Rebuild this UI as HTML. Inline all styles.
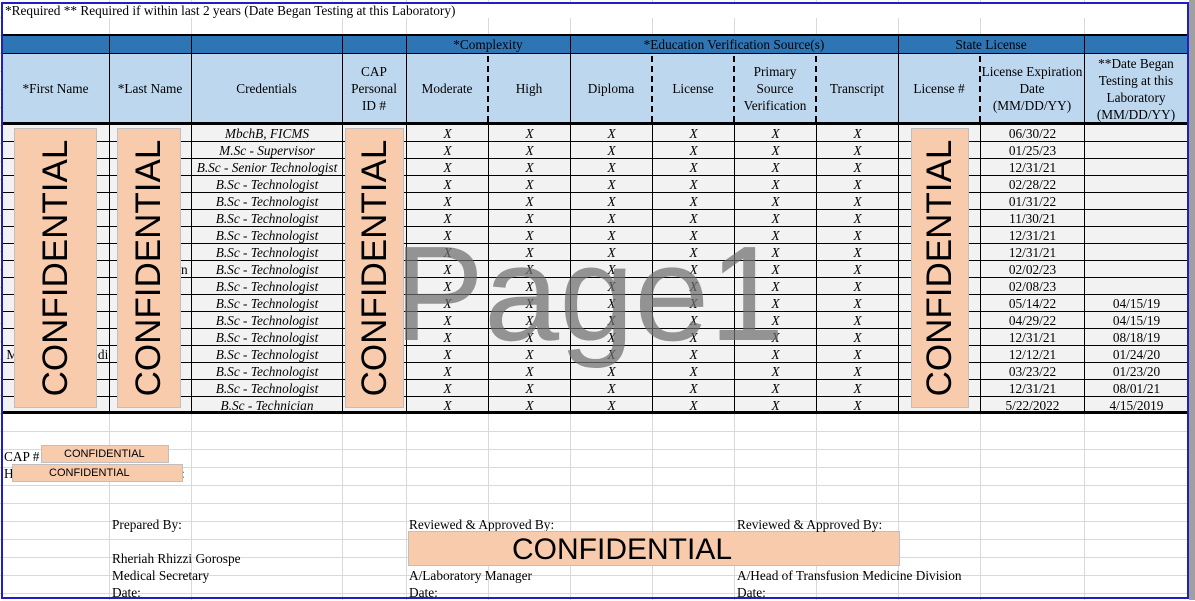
<!DOCTYPE html>
<html><head><meta charset="utf-8"><style>
*{margin:0;padding:0;box-sizing:border-box}
body{width:1195px;height:600px;position:relative;overflow:hidden;background:#fff;font-family:"Liberation Serif",serif;font-size:13px;color:#000}
.a{position:absolute}
table{border-collapse:collapse;table-layout:fixed;position:absolute;left:2px;top:124px}
td{border:1px solid #000;height:17px;padding:0;text-align:center;font-style:italic;font-size:13.3px;line-height:15px;background:#f2f2f2;white-space:nowrap;overflow:hidden}
td.n{font-style:normal}
.hd{position:absolute;top:54px;height:69px;background:#bdd7ee;display:flex;align-items:center;justify-content:center;text-align:center;line-height:17px;font-size:13.3px}
.bh{position:absolute;top:36px;height:18px;background:#2e75b6;text-align:center;line-height:18px;font-size:13.3px}
.vl{position:absolute;width:1px;background:#000}
.dl{position:absolute;width:0;border-left:2px dashed #000;top:56px;height:66px}
.conf{position:absolute;background:#f8cbad;border:1px solid #bfbfbf;overflow:hidden}
.conf span{position:absolute;left:50%;top:50%;transform:translate(-50%,-50%) rotate(-90deg);font-family:"Liberation Sans",sans-serif;font-size:35px;white-space:nowrap;color:#000}
.t{position:absolute;font-size:13.3px;white-space:nowrap}
</style></head><body>
<div class="a" style="left:0;top:0;width:1188px;height:600px;background-image:repeating-linear-gradient(to bottom,transparent 0 17px,#d9d9d9 17px 18px)"></div>
<div class="a" style="left:0;top:0;width:1188px;height:600px;background-image:linear-gradient(#d9d9d9,#d9d9d9),linear-gradient(#d9d9d9,#d9d9d9),linear-gradient(#d9d9d9,#d9d9d9),linear-gradient(#d9d9d9,#d9d9d9),linear-gradient(#d9d9d9,#d9d9d9),linear-gradient(#d9d9d9,#d9d9d9),linear-gradient(#d9d9d9,#d9d9d9),linear-gradient(#d9d9d9,#d9d9d9),linear-gradient(#d9d9d9,#d9d9d9),linear-gradient(#d9d9d9,#d9d9d9),linear-gradient(#d9d9d9,#d9d9d9),linear-gradient(#d9d9d9,#d9d9d9);background-size:1px 600px;background-repeat:no-repeat;background-position:109px 0,191px 0,342px 0,406px 0,488px 0,570px 0,652px 0,734px 0,816px 0,898px 0,980px 0,1084px 0"></div>
<div class="a" style="left:3px;top:3px;width:1184px;height:15px;background:#fff"></div>
<div class="t" style="left:5px;top:3px">*Required ** Required if within last 2 years (Date Began Testing at this Laboratory)</div>
<div class="a" style="left:2px;top:34px;width:1186px;height:2px;background:#000"></div>
<div class="bh" style="left:2px;width:1186px"></div>
<div class="bh" style="left:406px;width:164px">*Complexity</div>
<div class="bh" style="left:570px;width:328px">*Education Verification Source(s)</div>
<div class="bh" style="left:898px;width:186px">State License</div>
<div class="hd" style="left:2px;width:107px">*First Name</div>
<div class="hd" style="left:109px;width:82px">*Last Name</div>
<div class="hd" style="left:191px;width:151px">Credentials</div>
<div class="hd" style="left:342px;width:64px">CAP<br>Personal<br>ID #</div>
<div class="hd" style="left:406px;width:82px">Moderate</div>
<div class="hd" style="left:488px;width:82px">High</div>
<div class="hd" style="left:570px;width:82px">Diploma</div>
<div class="hd" style="left:652px;width:82px">License</div>
<div class="hd" style="left:734px;width:82px">Primary<br>Source<br>Verification</div>
<div class="hd" style="left:816px;width:82px">Transcript</div>
<div class="hd" style="left:898px;width:82px">License #</div>
<div class="hd" style="left:980px;width:104px">License Expiration<br>Date<br>(MM/DD/YY)</div>
<div class="hd" style="left:1084px;width:104px;align-items:flex-start;padding-top:1px">**Date Began<br>Testing at this<br>Laboratory<br>(MM/DD/YY)</div>
<div class="vl" style="left:109px;top:36px;height:88px"></div>
<div class="vl" style="left:191px;top:36px;height:88px"></div>
<div class="vl" style="left:342px;top:36px;height:88px"></div>
<div class="vl" style="left:406px;top:36px;height:88px"></div>
<div class="vl" style="left:570px;top:36px;height:88px"></div>
<div class="vl" style="left:898px;top:36px;height:88px"></div>
<div class="vl" style="left:1084px;top:36px;height:88px"></div>
<div class="a" style="left:2px;top:53px;width:1186px;height:1px;background:#000"></div>
<div class="dl" style="left:487px"></div><div class="dl" style="left:651px"></div><div class="dl" style="left:733px"></div><div class="dl" style="left:815px"></div><div class="dl" style="left:979px"></div>
<table>
<colgroup><col style="width:107px"><col style="width:82px"><col style="width:151px"><col style="width:64px"><col style="width:82px"><col style="width:82px"><col style="width:82px"><col style="width:82px"><col style="width:82px"><col style="width:82px"><col style="width:82px"><col style="width:104px"><col style="width:104px"></colgroup>
<tr><td></td><td></td><td>MbchB, FICMS</td><td></td><td>X</td><td>X</td><td>X</td><td>X</td><td>X</td><td>X</td><td></td><td class="n">06/30/22</td><td></td></tr>
<tr><td></td><td></td><td>M.Sc - Supervisor</td><td></td><td>X</td><td>X</td><td>X</td><td>X</td><td>X</td><td>X</td><td></td><td class="n">01/25/23</td><td></td></tr>
<tr><td></td><td></td><td>B.Sc - Senior Technologist</td><td></td><td>X</td><td>X</td><td>X</td><td>X</td><td>X</td><td>X</td><td></td><td class="n">12/31/21</td><td></td></tr>
<tr><td></td><td></td><td>B.Sc - Technologist</td><td></td><td>X</td><td>X</td><td>X</td><td>X</td><td>X</td><td>X</td><td></td><td class="n">02/28/22</td><td></td></tr>
<tr><td></td><td></td><td>B.Sc - Technologist</td><td></td><td>X</td><td>X</td><td>X</td><td>X</td><td>X</td><td>X</td><td></td><td class="n">01/31/22</td><td></td></tr>
<tr><td></td><td></td><td>B.Sc - Technologist</td><td></td><td>X</td><td>X</td><td>X</td><td>X</td><td>X</td><td>X</td><td></td><td class="n">11/30/21</td><td></td></tr>
<tr><td></td><td></td><td>B.Sc - Technologist</td><td></td><td>X</td><td>X</td><td>X</td><td>X</td><td>X</td><td>X</td><td></td><td class="n">12/31/21</td><td></td></tr>
<tr><td></td><td></td><td>B.Sc - Technologist</td><td></td><td>X</td><td>X</td><td>X</td><td>X</td><td>X</td><td>X</td><td></td><td class="n">12/31/21</td><td></td></tr>
<tr><td></td><td class="n" style="text-align:right">n&nbsp;</td><td>B.Sc - Technologist</td><td></td><td>X</td><td>X</td><td>X</td><td>X</td><td>X</td><td>X</td><td></td><td class="n">02/02/23</td><td></td></tr>
<tr><td></td><td></td><td>B.Sc - Technologist</td><td></td><td>X</td><td>X</td><td>X</td><td>X</td><td>X</td><td>X</td><td></td><td class="n">02/08/23</td><td></td></tr>
<tr><td></td><td></td><td>B.Sc - Technologist</td><td></td><td>X</td><td>X</td><td>X</td><td>X</td><td>X</td><td>X</td><td></td><td class="n">05/14/22</td><td class="n">04/15/19</td></tr>
<tr><td></td><td></td><td>B.Sc - Technologist</td><td></td><td>X</td><td>X</td><td>X</td><td>X</td><td>X</td><td>X</td><td></td><td class="n">04/29/22</td><td class="n">04/15/19</td></tr>
<tr><td></td><td></td><td>B.Sc - Technologist</td><td></td><td>X</td><td>X</td><td>X</td><td>X</td><td>X</td><td>X</td><td></td><td class="n">12/31/21</td><td class="n">08/18/19</td></tr>
<tr><td class="n" style="text-align:left">&nbsp;M&nbsp;&nbsp;&nbsp;&nbsp;&nbsp;&nbsp;&nbsp;&nbsp;&nbsp;&nbsp;&nbsp;&nbsp;&nbsp;&nbsp;&nbsp;&nbsp;&nbsp;&nbsp;&nbsp;&nbsp;&nbsp;&nbsp;&nbsp;&nbsp;di</td><td></td><td>B.Sc - Technologist</td><td></td><td>X</td><td>X</td><td>X</td><td>X</td><td>X</td><td>X</td><td></td><td class="n">12/12/21</td><td class="n">01/24/20</td></tr>
<tr><td></td><td></td><td>B.Sc - Technologist</td><td></td><td>X</td><td>X</td><td>X</td><td>X</td><td>X</td><td>X</td><td></td><td class="n">03/23/22</td><td class="n">01/23/20</td></tr>
<tr><td></td><td></td><td>B.Sc - Technologist</td><td></td><td>X</td><td>X</td><td>X</td><td>X</td><td>X</td><td>X</td><td></td><td class="n">12/31/21</td><td class="n">08/01/21</td></tr>
<tr><td></td><td></td><td>B.Sc - Technician</td><td></td><td>X</td><td>X</td><td>X</td><td>X</td><td>X</td><td>X</td><td></td><td class="n">5/22/2022</td><td class="n">4/15/2019</td></tr>
</table>
<div class="a" style="left:2px;top:122px;width:1186px;height:2px;background:#000"></div>
<div class="a" style="left:2px;top:411px;width:1186px;height:2px;background:#000"></div>
<div class="a" style="left:394px;top:226px;font-family:'Liberation Sans',sans-serif;font-size:135px;line-height:135px;color:rgba(110,110,110,0.72);white-space:nowrap">Page1</div>
<div class="conf" style="left:14px;top:128px;width:83px;height:280px"><span>CONFIDENTIAL</span></div>
<div class="conf" style="left:117px;top:128px;width:64px;height:280px"><span>CONFIDENTIAL</span></div>
<div class="conf" style="left:345px;top:128px;width:59px;height:280px"><span>CONFIDENTIAL</span></div>
<div class="conf" style="left:911px;top:128px;width:58px;height:280px"><span>CONFIDENTIAL</span></div>
<div class="t" style="left:4px;top:449px">CAP #</div>
<div class="a" style="left:41px;top:445px;width:128px;height:18px;background:#f8cbad;border:1px solid #bfbfbf;font-family:'Liberation Sans',sans-serif;font-size:11px;line-height:16px;padding-left:22px">CONFIDENTIAL</div>
<div class="t" style="left:4px;top:466px">H</div>
<div class="t" style="left:181px;top:466px">:</div>
<div class="a" style="left:12px;top:464px;width:171px;height:18px;background:#f8cbad;border:1px solid #bfbfbf;font-family:'Liberation Sans',sans-serif;font-size:11px;line-height:17px;padding-left:36px">CONFIDENTIAL</div>
<div class="t" style="left:112px;top:517px">Prepared By:</div>
<div class="t" style="left:112px;top:551px">Rheriah Rhizzi Gorospe</div>
<div class="t" style="left:112px;top:568px">Medical Secretary</div>
<div class="t" style="left:112px;top:585px">Date:</div>
<div class="t" style="left:409px;top:517px">Reviewed &amp; Approved By:</div>
<div class="a" style="left:408px;top:531px;width:492px;height:35px;background:#f8cbad;border:1px solid #bfbfbf;font-family:'Liberation Sans',sans-serif;font-size:30px;line-height:36px;padding-left:103px">CONFIDENTIAL</div>
<div class="t" style="left:409px;top:568px">A/Laboratory Manager</div>
<div class="t" style="left:409px;top:585px">Date:</div>
<div class="t" style="left:737px;top:517px">Reviewed &amp; Approved By:</div>
<div class="t" style="left:737px;top:568px">A/Head of Transfusion Medicine Division</div>
<div class="t" style="left:737px;top:585px">Date:</div>
<div class="a" style="left:1px;top:2px;width:2px;height:597px;background:#1f1fc8"></div>
<div class="a" style="left:1187px;top:2px;width:2px;height:597px;background:#1f1fc8"></div>
<div class="a" style="left:1px;top:2px;width:1188px;height:2px;background:#1f1fc8"></div>
<div class="a" style="left:1px;top:597px;width:1188px;height:2px;background:#1f1fc8"></div>
<div class="a" style="left:1189px;top:0;width:6px;height:600px;background:#a0a0a0"></div>
</body></html>
